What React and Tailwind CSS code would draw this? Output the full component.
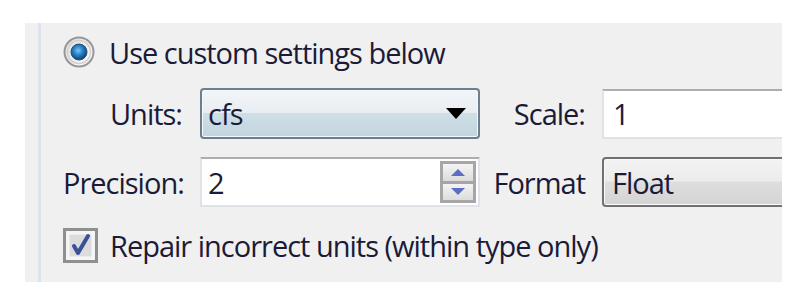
import React from "react";

const font = { fontFamily: '"Open Sans", "Noto Sans", sans-serif' };

function Radio() {
  return (
    <svg width="32" height="32" viewBox="0 0 32 32">
      <defs>
        <radialGradient id="dot" cx="45%" cy="40%" r="60%">
          <stop offset="0%" stopColor="#7cc4f4" />
          <stop offset="45%" stopColor="#2a86cc" />
          <stop offset="100%" stopColor="#0d3f70" />
        </radialGradient>
        <linearGradient id="ring" x1="0" y1="0" x2="1" y2="1">
          <stop offset="0%" stopColor="#dcdcdc" />
          <stop offset="100%" stopColor="#ffffff" />
        </linearGradient>
      </defs>
      <circle cx="16" cy="16" r="14.5" fill="url(#ring)" stroke="#979797" strokeWidth="2" />
      <circle cx="16" cy="16" r="11.5" fill="none" stroke="#d0d0d0" strokeWidth="1.5" />
      <circle cx="16" cy="16" r="8" fill="url(#dot)" stroke="#2b4f72" strokeWidth="1" />
    </svg>
  );
}

function Checkbox() {
  return (
    <svg width="35" height="35" viewBox="0 0 35 35">
      <rect x="1.5" y="1.5" width="32" height="32" fill="#f4f4f4" stroke="#8e8f8f" strokeWidth="3" />
      <rect x="6" y="6" width="23" height="23" fill="#dcdcdc" stroke="#f8f8f8" strokeWidth="1" />
      <path d="M11 18 L15 25 L25 8" fill="none" stroke="#3b4f9a" strokeWidth="4" strokeLinejoin="round" strokeLinecap="round" />
    </svg>
  );
}

export default function App() {
  return (
    <div className="bg-white w-[805px] h-[305px] pl-[25px] pt-[23px]" style={font}>
      <div className="flex w-[757px] h-[259px] bg-[#f0f0f0] overflow-hidden">
        <div className="w-[13px] shrink-0" />
        <div className="w-[3px] shrink-0 bg-[#dce3ea]" />
        <div className="flex flex-col shrink-0 pl-[22px] pt-[13px] text-[29px] tracking-[-1px] text-[#1b1b38] leading-none">
          <div className="flex items-center h-[32px]">
            <Radio />
            <span className="ml-[14px]">Use custom settings below</span>
          </div>

          <div className="flex items-center h-[51px] mt-[20px]">
            <span className="w-[119px] shrink-0 text-right">Units:</span>
            <div className="ml-[18px] w-[280px] shrink-0 h-[51px] rounded-[4px] border-2 border-[#6c7f90] bg-[linear-gradient(to_bottom,#f2f5f8_0%,#e9eef2_48%,#cfdee6_50%,#c2d5df_100%)] flex items-center pl-[6px] pr-[12px] shadow-[inset_0_0_0_1px_#f4f8fb]">
              <span className="flex-1">cfs</span>
              <svg width="20" height="11" viewBox="0 0 20 11">
                <path d="M0 0 H20 L10 11 Z" fill="#000" />
              </svg>
            </div>
            <span className="w-[105px] shrink-0 text-right">Scale:</span>
            <div className="ml-[17px] w-[200px] shrink-0 h-[50px] bg-white border-2 border-[#dfe3e9] border-t-[#abadb3] flex items-center pl-[9px]">
              1
            </div>
          </div>

          <div className="flex items-center h-[50px] mt-[18px]">
            <span className="w-[119px] shrink-0 text-right">Precision:</span>
            <div className="ml-[18px] w-[280px] shrink-0 h-[50px] bg-white border-2 border-[#dfe3e9] border-t-[#abadb3] flex items-center pl-[6px] pr-[2px]">
              <span className="flex-1">2</span>
              <div className="w-[36px] h-[42px] border-[3px] border-[#a6a6a6] bg-[#a6a6a6] flex flex-col gap-[3px]">
                <div className="flex-1 bg-gradient-to-b from-[#f4f4f4] to-[#dcdcdc] flex items-center justify-center">
                  <svg width="14" height="7" viewBox="0 0 14 7">
                    <path d="M0 7 L7 0 L14 7 Z" fill="#5a6fc4" />
                  </svg>
                </div>
                <div className="flex-1 bg-gradient-to-b from-[#f4f4f4] to-[#dcdcdc] flex items-center justify-center">
                  <svg width="14" height="7" viewBox="0 0 14 7">
                    <path d="M0 0 L14 0 L7 7 Z" fill="#5a6fc4" />
                  </svg>
                </div>
              </div>
            </div>
            <span className="w-[105px] shrink-0 text-right">Format</span>
            <div className="ml-[17px] w-[200px] shrink-0 h-[50px] rounded-[4px] border-2 border-[#707070] bg-[linear-gradient(to_bottom,#f3f3f3_0%,#ececec_48%,#dedede_50%,#d4d4d4_100%)] flex items-center pl-[8px] shadow-[inset_0_0_0_1px_#fafafa]">
              Float
            </div>
          </div>

          <div className="flex items-center h-[35px] mt-[21px]">
            <Checkbox />
            <span className="ml-[12px]">Repair incorrect units (within type only)</span>
          </div>
        </div>
      </div>
    </div>
  );
}
